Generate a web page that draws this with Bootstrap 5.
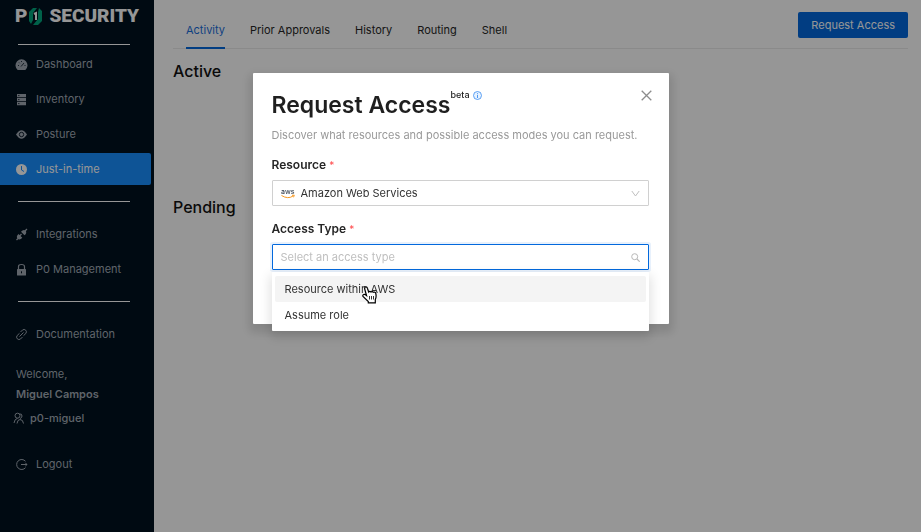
<!DOCTYPE html>
<html lang="en">
<head>
<meta charset="utf-8">
<meta name="viewport" content="width=device-width, initial-scale=1">
<title>P0 Security – Request Access</title>
<link href="https://cdn.jsdelivr.net/npm/bootstrap@5.3.0/dist/css/bootstrap.min.css" rel="stylesheet">
<style>
  body { font-family: Inter, "Liberation Sans", sans-serif; font-size: 11px; line-height: 16px; color: #262626; }
  .side { width: 154px; background: #00111f; color: #a2abb5; padding: 4px 3px 0 0; }
  .brand { color: #fff; padding-left: 15px; height: 24px; font: 900 19px/24px Roboto, sans-serif; text-decoration: none; }
  .brand svg { margin: 0 6px 0 1px; }
  .side-rule { height: 1px; background: #fff; margin: 16px 21px 16px 18px; }
  .side-rule.first { margin-bottom: 3px; }
  .side .nav { row-gap: 3px; }
  .side .nav-link { color: inherit; height: 32px; padding: 0 0 0 15px; gap: 8px; border-radius: 0 2px 2px 0; }
  .side .nav-link.active { background: #1890ff; color: #fff; }
  .who { padding-left: 16px; }
  .side .logout { margin-top: 22px; }
  .tabs { border-bottom: 1px solid #ebebeb; padding-left: 13px; height: 37px; }
  .tabs .nav { gap: 25px; }
  .tabs .nav-link { color: #262626; padding: 10px 0 9px; border-bottom: 2px solid transparent; margin-bottom: -1px; }
  .tabs .nav-link.active { color: #1b6fdc; border-color: #0369dd; }
  .btn-req, .btn-req:hover { background: #0369dd; color: #fff; font-size: 11px; line-height: 16px; padding: 5px 13px; border: 0; border-radius: 2px; }
  .content { padding: 12px 13px 0 19px; }
  .content h2 { font-size: 16px; line-height: 20px; font-weight: 500; margin: 0; color: #111; }
  .backdrop { background: rgba(0,0,0,.41); z-index: 10; }
  .dialog-wrap { z-index: 20; padding-top: 73px; }
  .panel { width: 416px; background: #fff; padding: 17px 20px 54px 19px; box-shadow: 0 5px 10px 4px rgba(0,0,0,.12); border-radius: 1px; }
  .panel h1 { font-size: 23px; line-height: 30px; font-weight: 600; margin: 0; color: #1f1f1f; }
  .beta { font-size: 9px; line-height: 10px; font-weight: 500; color: #1f1f1f; }
  .beta svg { margin-left: 3px; }
  .hint { color: #999; margin: 7px 0 13px; }
  .panel label { font-size: 12px; line-height: 18px; font-weight: 600; margin: 0; }
  .field + label.d-block { margin-top: 14px; }
  .req { color: #ff4d4f; font-size: 10px; font-weight: 400; line-height: 10px; }
  .field { border: 1px solid #d0d0d0; border-radius: 1px; height: 26px; padding: 0 8px; gap: 6px; margin-top: 6px; }
  .field select, .field input { appearance: none; border: 0; outline: 0; background: none; padding: 0; font-size: 11px; line-height: 16px; color: #333; }
  .field input::placeholder { color: #bfbfbf; opacity: 1; }
  .field.focused { border-color: #0369dd; box-shadow: 0 0 0 2px #e8f1fc; }
  .options.dropdown-menu { top: 27px; left: -1px; right: -1px; margin: 0; padding: 4px 3px 3px; border: 0; border-radius: 1px; font-size: 11px; box-shadow: 0 5px 12px 2px rgba(0,0,0,.12); }
  .options .dropdown-item { line-height: 16px; padding: 5px 10px; color: #333; border-radius: 2px; }
  .options .dropdown-item.hovered { background: #f4f4f4; }
  .pointer { top: 14px; left: 90px; }
  .close-btn { padding: 0; border: 0; background: none; line-height: 0; color: #8c8c8c; margin-right: -3px; }
</style>
</head>
<body>
<div class="d-flex min-vh-100">
  <aside class="side flex-shrink-0">
    <a class="brand d-flex align-items-center" href="#">P<svg width="15" height="19" viewBox="0 0 15 19" aria-label="0"><path d="M5 1H9L5 6V13L3 17L1 14V5Z" fill="#00a67d"/><path d="M11 1L14 4V14L10 18H5L10 12V5Z" fill="#00a67d"/><path d="M6 7L8 6V13" fill="none" stroke="#fff" stroke-width="2"/></svg>SECURITY</a>
    <div class="side-rule first"></div>
    <nav class="nav flex-column">
      <a class="nav-link d-flex align-items-center" href="#"><svg width="13" height="13" viewBox="0 0 13 13"><path d="M2.700 12A6 6 0 1 1 10.300 12Z" fill="currentColor"/><path d="M6 8.500L9 5M3 7.500H4M4 4.500L4.700 5.200M6.500 3V4M9.500 7.500H10.500" stroke="#00111f" stroke-width=".8"/></svg>Dashboard</a>
      <a class="nav-link d-flex align-items-center" href="#"><svg width="13" height="13" viewBox="0 0 13 13"><path d="M2 1H11V4.300H2ZM2 5H11V8.200H2ZM2 9H11V12.300H2Z" fill="currentColor"/><path d="M3 2.600H4.500M3 6.600H4.500M3 10.600H4.500" stroke="#00111f" stroke-width=".8"/></svg>Inventory</a>
      <a class="nav-link d-flex align-items-center" href="#"><svg width="13" height="13" viewBox="0 0 13 13"><path d="M1 6.500Q6.500-2 12 6.500Q6.500 15 1 6.500Z" fill="currentColor"/><circle cx="6.500" cy="6.500" r="2.200" fill="none" stroke="#00111f" stroke-width=".9"/></svg>Posture</a>
      <a class="nav-link active d-flex align-items-center" href="#" aria-current="page"><svg width="13" height="13" viewBox="0 0 13 13"><circle cx="6.500" cy="6.500" r="5.500" fill="currentColor"/><path d="M6.500 3V7L9 8.500" fill="none" stroke="#1890ff"/></svg>Just-in-time</a>
    </nav>
    <div class="side-rule"></div>
    <nav class="nav flex-column">
      <a class="nav-link d-flex align-items-center" href="#"><svg width="13" height="13" viewBox="0 0 13 13" fill="currentColor"><path d="M1.500 12L3 10.500M10 3L12 1" stroke="currentColor" stroke-width="1.300"/><path d="M3.500 6L7.300 9.800Q5 12.500 2.500 10.800Q.8 8.300 3.500 6ZM6 3.800Q8.300 1 10.600 2.500Q12.300 5 9.500 7.300ZM4.500 7.300L6 5.500L7 6.500L5.500 8Z"/></svg>Integrations</a>
      <a class="nav-link d-flex align-items-center" href="#"><svg width="13" height="13" viewBox="0 0 13 13"><path d="M3.500 6V3.500Q3.500 1.500 6.500 1.500Q9.500 1.500 9.500 3.500V6" fill="none" stroke="currentColor" stroke-width="1.200"/><rect x="2" y="6" width="9" height="6.500" rx=".6" fill="currentColor"/><path d="M6.500 8.300V10.300" stroke="#00111f"/></svg>P0 Management</a>
    </nav>
    <div class="side-rule"></div>
    <nav class="nav flex-column">
      <a class="nav-link d-flex align-items-center" href="#"><svg width="13" height="13" viewBox="0 0 13 13" fill="none" stroke="currentColor"><path d="M5.500 4L7.500 2Q9.200 .7 10.700 2.200Q12.200 3.700 10.800 5.500L8.500 7.700M7.500 9L5.500 11Q3.800 12.300 2.300 10.800Q.8 9.300 2.200 7.500L4.500 5.300M4.500 8.500L8.500 4.500"/></svg>Documentation</a>
    </nav>
    <div class="who mt-3"><div class="mb-1">Welcome,</div><div class="fw-semibold">Miguel Campos</div></div>
    <div class="d-flex align-items-center fw-medium ps-2 ms-1 mt-2"><svg class="me-1" width="14" height="13" viewBox="0 0 14 13" fill="none" stroke="currentColor"><circle cx="5.500" cy="3.700" r="2.500"/><path d="M2 11Q2.500 7 5.500 6.300M7.500 2Q10 1.500 10 4Q10 6 8 6.500M5 11.500Q5.500 7.500 8 7.500Q11 7.500 11.500 11.500"/></svg>p0-miguel</div>
    <nav class="nav flex-column logout">
      <a class="nav-link d-flex align-items-center" href="#"><svg width="13" height="13" viewBox="0 0 13 13" fill="none" stroke="currentColor"><path d="M10.500 3.300A5 5 0 1 0 10.500 9.700M6 6.500H12M10.300 4.800L12 6.500L10.300 8.200"/></svg>Logout</a>
    </nav>
  </aside>
  <main class="content flex-grow-1">
    <div class="d-flex tabs align-items-start">
      <nav class="nav flex-grow-1 flex-nowrap">
        <a class="nav-link active" href="#" aria-current="page">Activity</a>
        <a class="nav-link" href="#">Prior Approvals</a>
        <a class="nav-link" href="#">History</a>
        <a class="nav-link" href="#">Routing</a>
        <a class="nav-link" href="#">Shell</a>
      </nav>
      <button class="btn btn-req" type="button">Request Access</button>
    </div>
    <section class="pt-2 mt-1 pb-5"><h2>Active</h2></section>
    <section class="pt-5 mt-3"><h2 class="mt-1">Pending</h2></section>
  </main>
</div>

<div class="backdrop position-fixed top-0 bottom-0 start-0 end-0"></div>
<div class="dialog-wrap position-fixed top-0 start-0 end-0 d-flex justify-content-center">
  <div class="panel" role="dialog" aria-modal="true" aria-labelledby="dlg-title">
    <div class="d-flex align-items-start">
      <h1 id="dlg-title">Request Access</h1>
      <span class="beta d-flex align-items-center">beta<svg width="9" height="9" viewBox="0 0 9 9"><circle cx="4.500" cy="4.500" r="4" fill="#e6f2ff" stroke="#3b8cf0" stroke-width=".8"/><path d="M4.500 4V7M4.500 2.200V3.200" stroke="#3b8cf0" stroke-width=".9"/></svg></span>
      <button class="close-btn ms-auto" type="button" aria-label="Close"><svg width="11" height="11" viewBox="0 0 11 11"><path d="M.7.7L10.300 10.300M10.300.7L.7 10.300" stroke="currentColor" stroke-width="1.300"/></svg></button>
    </div>
    <p class="hint">Discover what resources and possible access modes you can request.</p>
    <label class="d-block" for="resource">Resource <span class="req">*</span></label>
    <div class="field d-flex align-items-center">
      <svg width="14" height="12" viewBox="0 0 14 12" role="img" aria-label="aws"><text x="0" y="7" font-family="Inter, sans-serif" font-size="7" font-weight="500" fill="#3a4553">aws</text><path d="M.5 8.500Q7 12.500 12 9M11 8.300L13.300 8.200L12.500 10.300" fill="none" stroke="#f7981f"/></svg>
      <select id="resource" class="flex-grow-1"><option>Amazon Web Services</option></select>
      <svg width="9" height="7" viewBox="0 0 9 7"><path d="M.8 1L4.500 6L8.200 1" fill="none" stroke="#bfbfbf"/></svg>
    </div>
    <label class="d-block" for="access">Access Type <span class="req">*</span></label>
    <div class="field focused d-flex align-items-center position-relative">
      <input id="access" class="flex-grow-1" type="text" placeholder="Select an access type" role="combobox" aria-expanded="true">
      <svg width="9" height="9" viewBox="0 0 9 9" fill="none" stroke="#b8b8b8"><circle cx="3.700" cy="3.700" r="3"/><path d="M6 6L8.700 8.700" stroke-width="1.200"/></svg>
      <div class="dropdown-menu show options">
        <button class="dropdown-item hovered" type="button">Resource within AWS</button>
        <button class="dropdown-item" type="button">Assume role</button>
        <svg class="pointer position-absolute" width="15" height="18" viewBox="0 0 15 18"><path d="M4.500 9.500L2.700 3Q2.400 1.200 3.700 1Q5 .8 5.400 2.200L6.700 6Q7.800 4.800 9 6Q10.300 5 11.400 6.300Q13.300 5.700 13.800 7.500Q14.600 11 13.300 13.500V16.800H6.300V15.500L1 10.500Q.4 9 1.700 8.500Q3 8.200 4.500 9.500Z" fill="#fff" stroke="#000" stroke-width="1.200"/><path d="M7.500 10V13.500M9.500 10V13.500M11.500 10V13.500" stroke="#000" stroke-width=".8"/></svg>
      </div>
    </div>
  </div>
</div>
<script src="https://cdn.jsdelivr.net/npm/bootstrap@5.3.0/dist/js/bootstrap.bundle.min.js"></script>
</body>
</html>
